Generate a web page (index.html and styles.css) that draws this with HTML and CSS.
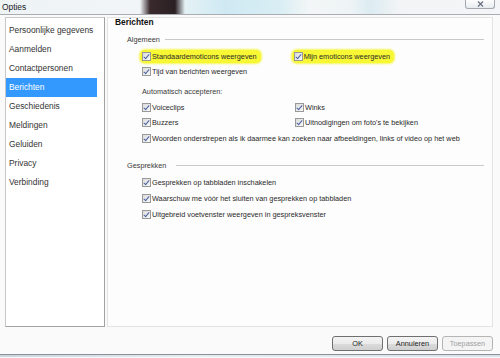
FILE: index.html
```html
<!DOCTYPE html>
<html lang="nl">
<head>
    <meta charset="UTF-8">
    <title>Opties</title>
    <link rel="stylesheet" href="styles.css">
</head>
<body>

    <div class="titlebar">
        <span class="title">Opties</span>
        <span class="close-btn">
            <svg width="9" height="6" viewBox="0 0 9 6"><path d="M2 0.5 L7 5.5 M7 0.5 L2 5.5" stroke="#6b7080" stroke-width="1.2"/></svg>
        </span>
    </div>

    <div class="dialog">
        <div class="main">
            <!-- lijst met categorieën -->
            <ul class="sidebar">
                <li>Persoonlijke gegevens</li>
                <li>Aanmelden</li>
                <li>Contactpersonen</li>
                <li class="selected">Berichten</li>
                <li>Geschiedenis</li>
                <li>Meldingen</li>
                <li>Geluiden</li>
                <li>Privacy</li>
                <li>Verbinding</li>
            </ul>

            <div class="panel">
                <h2>Berichten</h2>

                <div class="legend legend-first"><span>Algemeen</span></div>
                <div class="row row-first">
                    <label class="col highlight"><span class="check"></span>Standaardemoticons weergeven</label>
                    <label class="highlight"><span class="check"></span>Mijn emoticons weergeven</label>
                </div>
                <div class="row">
                    <label class="col"><span class="check"></span>Tijd van berichten weergeven</label>
                </div>

                <p class="caption">Automatisch accepteren:</p>
                <div class="row row-accept">
                    <label class="col"><span class="check"></span>Voiceclips</label>
                    <label><span class="check"></span>Winks</label>
                </div>
                <div class="row">
                    <label class="col"><span class="check"></span>Buzzers</label>
                    <label><span class="check"></span>Uitnodigingen om foto's te bekijken</label>
                </div>
                <div class="row row-web">
                    <label><span class="check"></span>Woorden onderstrepen als ik daarmee kan zoeken naar afbeeldingen, links of video op het web</label>
                </div>

                <div class="legend legend-second"><span>Gesprekken</span></div>
                <div class="row row-tall row-chat">
                    <label><span class="check"></span>Gesprekken op tabbladen inschakelen</label>
                </div>
                <div class="row row-tall">
                    <label><span class="check"></span>Waarschuw me vóór het sluiten van gesprekken op tabbladen</label>
                </div>
                <div class="row row-tall">
                    <label><span class="check"></span>Uitgebreid voetvenster weergeven in gespreksvenster</label>
                </div>
            </div>
        </div>

        <div class="buttons">
            <button>OK</button>
            <button>Annuleren</button>
            <button class="disabled">Toepassen</button>
        </div>
    </div>

    <div class="desktop-strip"></div>

</body>
</html>
```

FILE: styles.css
```css
* {
    margin: 0;
    padding: 0;
    box-sizing: border-box;
}
body {
    width: 500px;
    height: 358px;
    overflow: hidden;
    font-family: 'Liberation Sans', Arial, sans-serif;
    font-size: 7.3px;
    color: #2a2a2a;
    background-color: #f9f9f9;
}
.titlebar {
    height: 15px;
    display: flex;
    align-items: flex-start;
    background: linear-gradient(90deg, #eef3f6 0%, #f1f5f7 28%, #3a2a2e 30%, #2a2023 35%, #e4f1f5 37%, #cfe9f3 45%, #d9eef4 56%, #f3f6f6 62%, #eef4f6 70%, #dcecf2 74%, #f2f4f5 80%, #f4f5f6 100%);
    border-bottom: 1px solid #a9adb2;
}
.title {
    font-size: 8.4px;
    color: #222;
    padding: 2px 0 0 2px;
    line-height: 10px;
}
.close-btn {
    margin-left: auto;
    margin-right: 5px;
    width: 30px;
    height: 9px;
    display: flex;
    align-items: center;
    justify-content: center;
    background: linear-gradient(#fdfdfd, #e8ecef);
    border: 1px solid #a4a8ae;
    border-top: none;
    border-radius: 0 0 3px 3px;
}
.dialog {
    height: 340px;
    padding: 2px 7px 0 5px;
    background-color: #fafafa;
    border-bottom: 1px solid #8b9098;
}
.main {
    display: flex;
    gap: 2px;
    height: 310px;
}
.sidebar {
    list-style: none;
    width: 100px;
    background-color: #fff;
    border: 1px solid #a2a2a2;
    border-top-color: #c8c8c8;
    border-left-color: #c8c8c8;
    padding: 3px 0 0 0;
    font-size: 8.4px;
    color: #333;
}
.sidebar li {
    height: 19px;
    line-height: 19px;
    width: 91px;
    padding-left: 3px;
    white-space: nowrap;
}
.sidebar li.selected {
    background-color: #3399ff;
    color: #fff;
}
.panel {
    flex: 1;
    background-color: #fdfdfd;
    border: 1px solid #e3e3e3;
    padding-right: 8px;
}
.panel h2 {
    font-size: 8.4px;
    font-weight: bold;
    line-height: 9px;
    padding-left: 7px;
    color: #111;
}
.legend {
    display: flex;
    align-items: center;
    gap: 5px;
    height: 10px;
    padding-left: 19px;
    color: #3a3a3a;
}
.legend::after {
    content: "";
    flex: 1;
    border-top: 1px solid #c9c9c9;
}
.legend-first {
    margin-top: 7px;
}
.legend-second {
    margin-top: 14px;
}
.legend-second::after {
    margin-left: 5px;
}
.row {
    display: flex;
    align-items: center;
    height: 15px;
    padding-left: 34px;
    white-space: nowrap;
}
.row-first {
    margin-top: 5px;
}
.row-accept {
    margin-top: 3px;
}
.row-web {
    margin-top: 1px;
}
.row-chat {
    margin-top: 4px;
}
.row-tall {
    height: 16px;
}
.row label {
    display: flex;
    align-items: center;
}
.row .col {
    width: 153px;
}
.row .highlight {
    width: auto;
    background-color: #f7f733;
    margin-left: -2px;
    padding: 2px 4px 2px 2px;
    border-radius: 5px;
    box-shadow: 0 0 2px 1px #f7f75a;
}
.row .col.highlight {
    margin-right: 33px;
}
.check {
    width: 9px;
    height: 9px;
    margin-right: 1px;
    border: 1px solid #999;
    background: linear-gradient(135deg, #dcdcdc, #f8f8f8);
    position: relative;
}
.check::after {
    content: "";
    position: absolute;
    left: 2px;
    top: 0px;
    width: 2px;
    height: 5px;
    border: solid #4a62a0;
    border-width: 0 1.2px 1.2px 0;
    transform: rotate(40deg);
}
.caption {
    margin-top: 8px;
    line-height: 10px;
    padding-left: 34px;
    color: #3a3a3a;
}
.buttons {
    display: flex;
    justify-content: flex-end;
    gap: 4px;
    margin-top: 9px;
}
.buttons button {
    width: 51px;
    height: 15px;
    font-family: 'Liberation Sans', Arial, sans-serif;
    font-size: 7.3px;
    color: #222;
    background: linear-gradient(#f4f4f4 0%, #ebebeb 50%, #dcdcdc 51%, #cfcfcf 100%);
    border: 1px solid #707070;
    border-radius: 3px;
}
.buttons button.disabled {
    color: #a0a0a0;
    background: #f4f4f4;
    border-color: #b5b5b5;
}
.desktop-strip {
    height: 2px;
    background: linear-gradient(90deg, #c9d6de, #e7eef2 40%, #d8e2ea);
}
```
